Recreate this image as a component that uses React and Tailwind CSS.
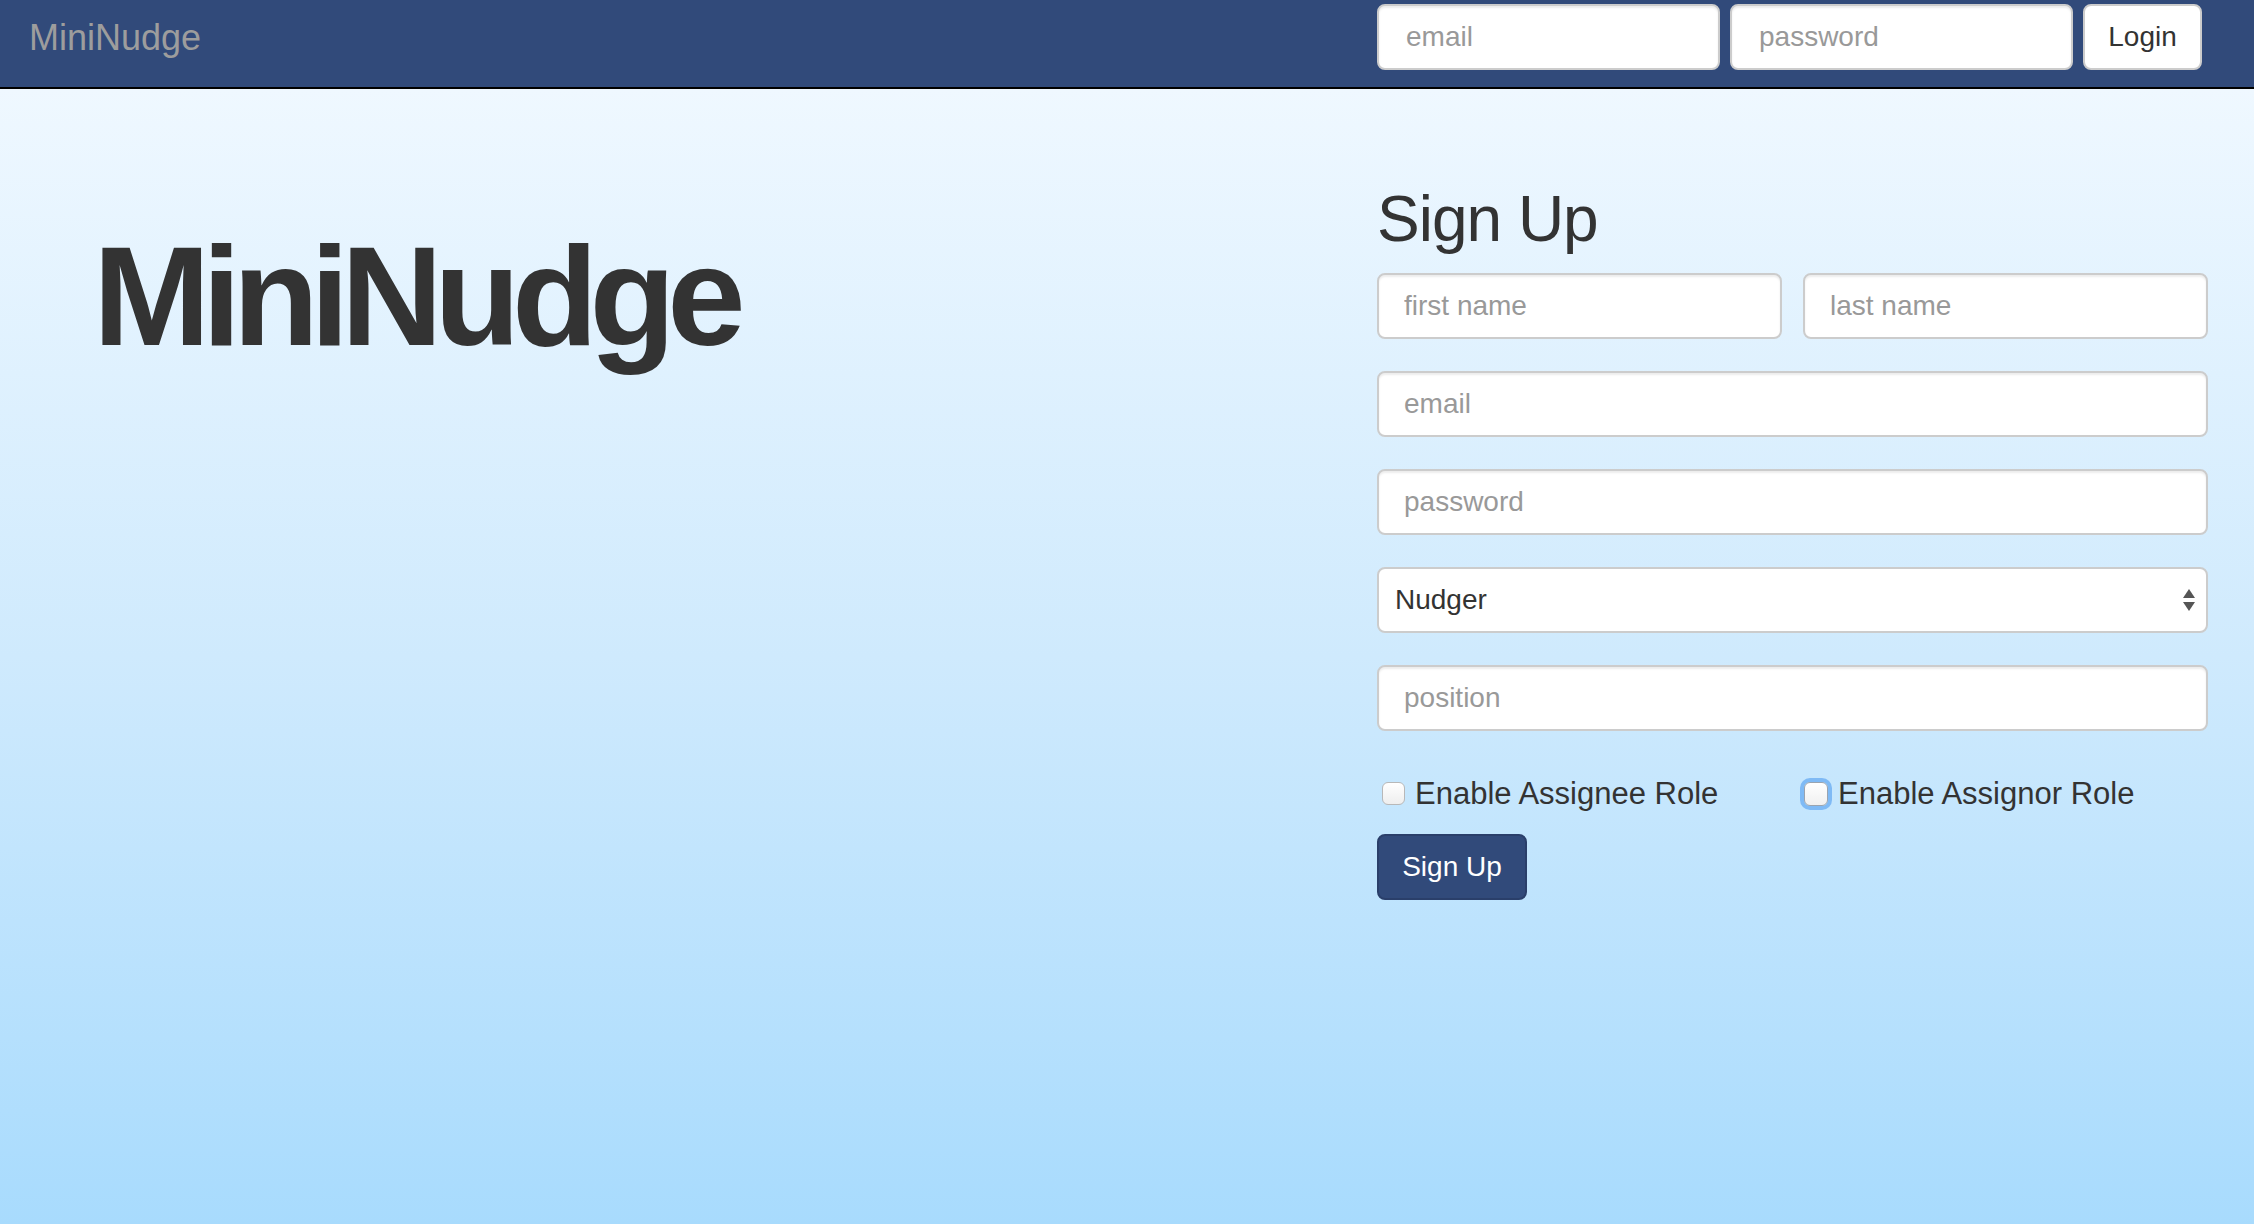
import React from 'react';

const font = { fontFamily: '"Liberation Sans", Arial, sans-serif' };

const inputCls =
  'w-full h-[66px] px-[25px] bg-white border-2 border-[#cccccc] rounded-[8px] text-[28px] text-[#555555] placeholder:text-[#999999] outline-none shadow-[inset_0_2px_2px_rgba(0,0,0,0.075)]';

const Navbar = () => (
  <div className="h-[89px] bg-[#314a7a] border-b-2 border-black flex items-center justify-between pl-[29px] pr-[52px]">
    <div className="text-[36px] text-[#9d9d9d] leading-none -mt-[12px]">MiniNudge</div>
    <div className="flex items-center gap-[10px] self-start pt-[4px]">
      <input
        type="text"
        placeholder="email"
        className="w-[343px] h-[66px] px-[27px] bg-white border-2 border-[#cccccc] rounded-[8px] text-[28px] placeholder:text-[#999999] outline-none shadow-[inset_0_2px_2px_rgba(0,0,0,0.075)]"
      />
      <input
        type="password"
        placeholder="password"
        className="w-[343px] h-[66px] px-[27px] bg-white border-2 border-[#cccccc] rounded-[8px] text-[28px] placeholder:text-[#999999] outline-none shadow-[inset_0_2px_2px_rgba(0,0,0,0.075)]"
      />
      <button className="w-[119px] h-[66px] bg-white border-2 border-[#cccccc] rounded-[8px] text-[28px] text-[#333333]">
        Login
      </button>
    </div>
  </div>
);

const Checkbox = ({ label, focused }) => (
  <label className="flex items-center gap-[10px] text-[31px] text-[#333333] leading-none">
    <span
      className={
        focused
          ? 'w-[24px] h-[24px] ml-[1px] rounded-[6px] border border-[#9aa4b0] bg-gradient-to-b from-white to-[#f0f0f0] ring-[4px] ring-[#7fbaf5]'
          : 'w-[23px] h-[23px] ml-[5px] rounded-[6px] border border-[#b8b8b8] bg-gradient-to-b from-white to-[#eeeeee]'
      }
    />
    <span>{label}</span>
  </label>
);

const SignUpForm = () => (
  <div className="w-[831px] pt-[98px]">
    <h2 className="text-[64px] leading-none text-[#333333] tracking-[-1px] mb-[22px]">Sign Up</h2>
    <div className="flex flex-col gap-[32px]">
      <div className="grid grid-cols-2 gap-[21px]">
        <input type="text" placeholder="first name" className={inputCls} />
        <input type="text" placeholder="last name" className={inputCls} />
      </div>
      <input type="text" placeholder="email" className={inputCls} />
      <input type="password" placeholder="password" className={inputCls} />
      <div className="relative">
        <select className="w-full h-[66px] pl-[16px] pr-[50px] appearance-none bg-white border-2 border-[#cccccc] rounded-[8px] text-[28px] text-[#333333] outline-none">
          <option>Nudger</option>
          <option>Nudgee</option>
        </select>
        <svg
          className="absolute right-[12px] top-[21px] w-[14px] h-[24px] pointer-events-none"
          viewBox="0 0 14 24"
        >
          <path d="M7 1 L13 10 L1 10 Z" fill="#555555" />
          <path d="M1 14 L13 14 L7 23 Z" fill="#555555" />
        </svg>
      </div>
      <input type="text" placeholder="position" className={inputCls} />
    </div>
    <div className="grid grid-cols-2 gap-[21px] mt-[47px]">
      <Checkbox label="Enable Assignee Role" />
      <Checkbox label="Enable Assignor Role" focused />
    </div>
    <button className="mt-[25px] w-[150px] h-[66px] bg-[#314a7a] border-2 border-[#2a3f6a] rounded-[8px] text-white text-[28px]">
      Sign Up
    </button>
  </div>
);

export default function App() {
  return (
    <div className="min-h-[1224px] flex flex-col" style={font}>
      <Navbar />
      <div className="flex-1 flex justify-between bg-gradient-to-b from-[#eff8ff] via-[#cfeafd] to-[#a8dbfd] pl-[93px] pr-[46px]">
        <div className="pt-[137px]">
          <h1 className="text-[141px] leading-none font-bold text-[#333333] tracking-[-8.5px]">MiniNudge</h1>
        </div>
        <SignUpForm />
      </div>
    </div>
  );
}
